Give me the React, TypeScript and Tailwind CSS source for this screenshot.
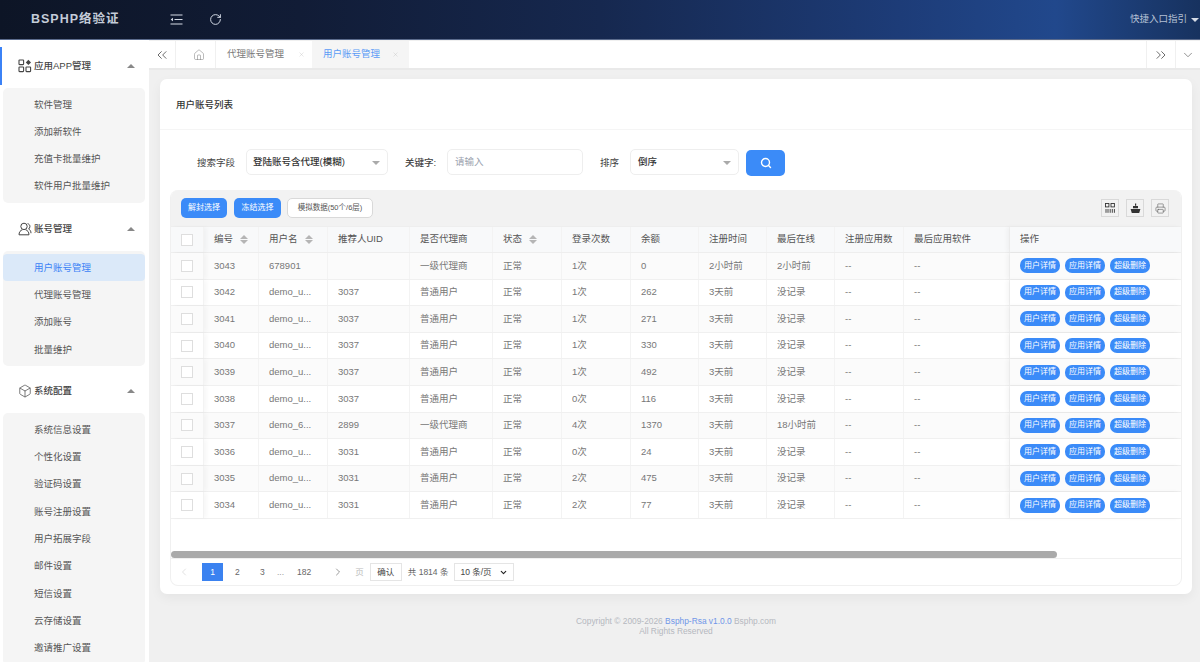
import React from "react";
import { ChevronsLeft, ChevronsRight, ChevronDown, ChevronLeft, ChevronRight, Home, RotateCw, Box, Printer, Search, X } from "lucide-react";

const font = "[font-family:'Liberation_Sans','Noto_Sans_CJK_SC',sans-serif]";

function AppIcon() {
  return (
    <svg width="14" height="14" viewBox="0 0 14 14" fill="none" stroke="#444" strokeWidth="1.1">
      <rect x="1" y="1" width="4.6" height="4.6" rx="0.6" />
      <rect x="1" y="8" width="4.6" height="4.6" rx="0.6" />
      <rect x="8" y="8" width="4.6" height="4.6" rx="0.6" />
      <path d="M10.4 0.8l2.6 2.6-2.6 2.6-2.6-2.6z" fill="#444" stroke="none" />
    </svg>
  );
}

function UserIcon() {
  return (
    <svg width="14" height="14" viewBox="0 0 14 14" fill="none" stroke="#444" strokeWidth="1">
      <circle cx="6" cy="4.4" r="3.2" />
      <path d="M1 12.8c0-2.8 1.6-4.6 3.4-5M7.6 7.8c1.8.4 3.4 2.2 3.4 5H1" />
      <path d="M9.6 1.6c1.6.5 2.5 1.7 2.3 3.2-.1 1-.6 1.7-1.3 2.2 1.4.6 2.4 2.2 2.4 4.2" />
    </svg>
  );
}

function MenuIcon() {
  return (
    <svg width="13" height="11" viewBox="0 0 13 11" fill="none" stroke="#d5dbe6" strokeWidth="1.2" className="ml-[20px]">
      <path d="M0.5 1h12M4.5 5.5h8M0.5 10h12" />
      <path d="M3 3.8v3.4L0.6 5.5z" fill="#d5dbe6" stroke="none" />
    </svg>
  );
}

function Caret({ up = false, color = "#999" }: { up?: boolean; color?: string }) {
  return (
    <svg width="8" height="4" viewBox="0 0 8 4" className="shrink-0">
      <path d={up ? "M4 0l4 4H0z" : "M0 0h8L4 4z"} fill={color} />
    </svg>
  );
}

function Sort() {
  return (
    <span className="flex flex-col gap-[1.5px] ml-[7px]">
      <Caret up color="#b5b5b5" />
      <Caret color="#b5b5b5" />
    </span>
  );
}

function Group({ title, icon, items, active, mark, mt }: { title: string; icon: React.ReactNode; items: string[]; active?: string; mark?: boolean; mt: string }) {
  return (
    <div className={mt}>
      <div className={`h-[38px] flex items-center pl-[15px] pr-[14px] border-l-2 ${mark ? "border-[#3b82f6]" : "border-transparent"}`}>
        <span className="w-[15px] flex justify-center">{icon}</span>
        <span className="ml-[2px] text-[9.5px] text-[#444] font-medium flex-1">{title}</span>
        <Caret up color="#888" />
      </div>
      <div className="ml-[3px] mr-[4px] mt-[3px] bg-[#f5f5f5] rounded-[5px] py-[3px]">
        {items.map((t) => (
          <div key={t} className={`h-[27.3px] flex items-center pl-[31px] text-[9.5px] rounded-[4px] ${t === active ? "bg-[#dbe9f9] text-[#3b82f6]" : "text-[#555]"}`}>
            {t}
          </div>
        ))}
      </div>
    </div>
  );
}

const widths = ["w-[33px]", "w-[55px]", "w-[69px]", "w-[82px]", "w-[83px]", "w-[69px]", "w-[69px]", "w-[68px]", "w-[68px]", "w-[68px]", "w-[69px]", "w-[106px]", "w-[171px]"];

const heads: [string, boolean][] = [
  ["", false],
  ["编号", true],
  ["用户名", true],
  ["推荐人UID", false],
  ["是否代理商", false],
  ["状态", true],
  ["登录次数", false],
  ["余额", false],
  ["注册时间", false],
  ["最后在线", false],
  ["注册应用数", false],
  ["最后应用软件", false],
  ["操作", false],
];

const rows: string[][] = [
  ["3043", "678901", "", "一级代理商", "正常", "1次", "0", "2小时前", "2小时前"],
  ["3042", "demo_u...", "3037", "普通用户", "正常", "1次", "262", "3天前", "没记录"],
  ["3041", "demo_u...", "3037", "普通用户", "正常", "1次", "271", "3天前", "没记录"],
  ["3040", "demo_u...", "3037", "普通用户", "正常", "1次", "330", "3天前", "没记录"],
  ["3039", "demo_u...", "3037", "普通用户", "正常", "1次", "492", "3天前", "没记录"],
  ["3038", "demo_u...", "3037", "普通用户", "正常", "0次", "116", "3天前", "没记录"],
  ["3037", "demo_6...", "2899", "一级代理商", "正常", "4次", "1370", "3天前", "18小时前"],
  ["3036", "demo_u...", "3031", "普通用户", "正常", "0次", "24", "3天前", "没记录"],
  ["3035", "demo_u...", "3031", "普通用户", "正常", "2次", "475", "3天前", "没记录"],
  ["3034", "demo_u...", "3031", "普通用户", "正常", "2次", "77", "3天前", "没记录"],
];

function Check() {
  return <span className="block w-[12px] h-[12px] bg-white border border-[#dedede]" />;
}

function Cell({ w, children, kind }: { w: string; children?: React.ReactNode; kind?: "first" | "last" }) {
  const extra =
    kind === "last"
      ? "shadow-[-3px_0_4px_rgba(0,0,0,0.04)]"
      : kind === "first"
        ? "border-r border-[#f3f3f3] shadow-[3px_0_4px_rgba(0,0,0,0.03)]"
        : "border-r border-[#f3f3f3]";
  return <div className={`${w} shrink-0 h-full flex items-center pl-[10px] ${extra} truncate`}>{children}</div>;
}

function Pill({ t }: { t: string }) {
  return <span className="h-[15px] w-[40px] mr-[5px] rounded-[7px] bg-[#3b8bf8] text-white text-[8px] flex items-center justify-center">{t}</span>;
}

function ToolIcon({ children }: { children: React.ReactNode }) {
  return <span className="w-[18px] h-[18px] border border-[#d9d9d9] flex items-center justify-center">{children}</span>;
}

export default function App() {
  return (
    <div className={`${font} w-[1200px] h-[662px] overflow-hidden flex flex-col bg-[#f0f0f0] text-[9.5px]`}>
      <header className="h-[40px] shrink-0 flex items-center border-b border-[#5b6b8c] bg-[linear-gradient(90deg,#0d1526_0%,#111c36_25%,#16284f_50%,#1d3c78_75%,#21488c_88%,#17325f_100%)]">
        <div className="w-[150px] pl-[31px] text-[#c4ccd9] text-[12.5px] font-bold tracking-[1px] whitespace-nowrap">BSPHP络验证</div>
        <MenuIcon />
        <RotateCw size={13} strokeWidth={1.8} color="#d5dbe6" className="ml-[26px]" />
        <div className="ml-auto flex items-center gap-[4px] pr-[1px] text-[#b4c0d4] text-[9.5px]">
          快捷入口指引
          <Caret color="#d5dbe6" />
        </div>
      </header>
      <div className="flex-1 flex min-h-0">
        <aside className="w-[149px] shrink-0 bg-white pt-[7px] overflow-hidden">
          <Group mark mt="" title="应用APP管理" icon={<AppIcon />} items={["软件管理", "添加新软件", "充值卡批量维护", "软件用户批量维护"]} />
          <Group mt="mt-[7px]" title="账号管理" icon={<UserIcon />} active="用户账号管理" items={["用户账号管理", "代理账号管理", "添加账号", "批量维护"]} />
          <Group mt="mt-[6px]" title="系统配置" icon={<Box size={14} strokeWidth={1.2} color="#444" />} items={["系统信息设置", "个性化设置", "验证码设置", "账号注册设置", "用户拓展字段", "邮件设置", "短信设置", "云存储设置", "邀请推广设置"]} />
        </aside>
        <main className="flex-1 min-w-0 flex flex-col">
          <div className="h-[29px] mt-[1px] shrink-0 flex bg-white border-b-2 border-[#e9e9e9] text-[#777]">
            <div className="w-[27px] flex items-center justify-center border-r border-[#f0f0f0]"><ChevronsLeft size={16} strokeWidth={1.3} color="#555" /></div>
            <div className="w-[40px] flex items-center justify-center pl-[7px] border-r border-[#f0f0f0]"><Home size={12} strokeWidth={1} color="#777" /></div>
            <div className="w-[96px] flex items-center pl-[11px]">
              <span className="flex-1">代理账号管理</span>
              <X size={7} strokeWidth={1.2} color="#bbb" className="mr-[7px]" />
            </div>
            <div className="w-[97px] flex items-center pl-[11px] bg-[#f5f5f5] text-[#5a9bf6]">
              <span className="flex-1">用户账号管理</span>
              <X size={7} strokeWidth={1.2} color="#bbb" className="mr-[10px]" />
            </div>
            <div className="ml-auto w-[29px] flex items-center justify-center border-l border-[#f0f0f0]"><ChevronsRight size={16} strokeWidth={1.3} color="#555" /></div>
            <div className="w-[25px] flex items-center justify-center border-l border-[#f0f0f0]"><ChevronDown size={14} strokeWidth={1.2} color="#666" /></div>
          </div>
          <div className="w-[1032px] h-[515px] ml-[11px] mt-[9px] shrink-0 bg-white rounded-[7px] shadow-[0_4px_12px_rgba(0,0,0,0.05)] flex flex-col">
            <div className="h-[51px] shrink-0 flex items-center pl-[16px] pt-[2px] border-b border-[#f5f5f5] text-[#333] font-medium">用户账号列表</div>
            <div className="h-[60px] shrink-0 flex items-center text-[#444] pt-[4px]">
              <span className="ml-[37px] w-[49px] pt-[2px]">搜索字段</span>
              <div className="w-[142px] h-[26px] pt-[1px] bg-white border border-[#eee] rounded-[5px] flex items-center justify-between pl-[6px] pr-[7px] text-[#333] font-medium">
                登陆账号含代理(模糊)
                <Caret color="#aaa" />
              </div>
              <span className="ml-[17px] w-[42px] pt-[2px] font-medium">关键字:</span>
              <div className="w-[136px] h-[26px] pt-[1px] border border-[#eee] rounded-[5px] flex items-center pl-[7px] text-[#9ca3af]">请输入</div>
              <span className="ml-[17px] w-[30px] pt-[2px]">排序</span>
              <div className="w-[109px] h-[26px] pt-[1px] border border-[#eee] rounded-[5px] flex items-center justify-between pl-[7px] pr-[7px] text-[#333] font-medium">
                倒序
                <Caret color="#aaa" />
              </div>
              <button className="ml-[7px] mt-[2px] w-[39px] h-[26px] rounded-[5px] bg-[#3b8bf8] flex items-center justify-center"><Search size={12} strokeWidth={2.8} color="#fff" /></button>
            </div>
            <div className="mx-[10px] h-[396px] shrink-0 border border-[#f0f0f0] border-t-0 rounded-[8px] flex flex-col overflow-hidden">
              <div className="h-[36px] shrink-0 bg-[#f2f2f2] flex items-center pl-[10px] pr-[12px]">
                <button className="w-[46px] h-[20px] rounded-[5px] bg-[#3b8bf8] text-white text-[8px]">解封选择</button>
                <button className="ml-[7px] w-[47px] h-[20px] rounded-[5px] bg-[#3b8bf8] text-white text-[8px]">冻结选择</button>
                <button className="ml-[6px] w-[86px] h-[20px] rounded-[5px] bg-white border border-[#d9d9d9] text-[#555] text-[7.5px]">模拟数据(50个/6层)</button>
                <div className="ml-auto flex gap-[7px]">
                  <ToolIcon>
                    <svg width="10" height="10" viewBox="0 0 10 10" fill="none" stroke="#333" strokeWidth="0.9">
                      <rect x="0.5" y="0.5" width="3.4" height="3.4" />
                      <rect x="6" y="0.5" width="3.4" height="3.4" />
                      <path d="M1 6v3.8M3 6v3.8M5.2 6v3.8M7.3 6v3.8M9.4 6v3.8" />
                    </svg>
                  </ToolIcon>
                  <ToolIcon>
                    <svg width="11" height="11" viewBox="0 0 11 11" fill="#333">
                      <path d="M5 0.5h1.2v2.2H5zM3 3h5v2.2H3zM0.6 6h9.8L9.2 10H1.8z" />
                    </svg>
                  </ToolIcon>
                  <ToolIcon><Printer size={11} strokeWidth={1.2} color="#555" /></ToolIcon>
                </div>
              </div>
              <div className="h-[27px] shrink-0 flex bg-[#f8f9fa] border-y border-[#eee] text-[#555]">
                {heads.map(([h, s], i) => (
                  <Cell key={i} w={widths[i]} kind={i === 12 ? "last" : i === 0 ? "first" : undefined}>
                    {i === 0 ? <Check /> : h}
                    {s && <Sort />}
                  </Cell>
                ))}
              </div>
              {rows.map((r, idx) => (
                <div key={r[0]} className={`h-[26.6px] shrink-0 flex border-b border-[#f0f0f0] text-[#777] ${idx % 2 === 0 ? "bg-[#fbfbfb]" : "bg-white"}`}>
                  <Cell w={widths[0]} kind="first"><Check /></Cell>
                  {r.map((c, i) => (
                    <Cell key={i} w={widths[i + 1]}>{c}</Cell>
                  ))}
                  <Cell w={widths[10]}>--</Cell>
                  <Cell w={widths[11]}>--</Cell>
                  <Cell w={widths[12]} kind="last">
                    <Pill t="用户详情" />
                    <Pill t="应用详情" />
                    <Pill t="超级删除" />
                  </Cell>
                </div>
              ))}
              <div className="flex-1" />
              <div className="h-[8px] shrink-0 border-b border-[#f0f0f0]">
                <div className="h-[7px] w-[886px] bg-[#aaaaaa] rounded-full" />
              </div>
              <div className="h-[26px] shrink-0 flex items-center text-[#666] text-[8.5px]">
                <ChevronLeft size={12} strokeWidth={1.2} color="#ccc" className="ml-[7px]" />
                <span className="ml-[12px] w-[21px] h-[18px] bg-[#3b82f0] text-white flex items-center justify-center">1</span>
                <span className="ml-[12px] w-[6px]">2</span>
                <span className="ml-[19px] w-[6px]">3</span>
                <span className="ml-[11px] text-[#999]">...</span>
                <span className="ml-[13px]">182</span>
                <ChevronRight size={12} strokeWidth={1.2} color="#555" className="ml-[21px]" />
                <span className="ml-[11px] text-[#bbb]">页</span>
                <span className="ml-[6px] w-[32px] h-[18px] border border-[#e5e5e5] text-[#444] flex items-center justify-center">确认</span>
                <span className="ml-[6px]">共 1814 条</span>
                <span className="ml-[6px] w-[60px] h-[18px] border border-[#e5e5e5] text-[#444] flex items-center justify-between px-[5px]">
                  10 条/页
                  <ChevronDown size={9} strokeWidth={3} color="#222" />
                </span>
              </div>
            </div>
          </div>
          <div className="w-[1032px] ml-[11px] mt-[22px] text-center text-[8.4px] leading-[10px] text-[#b5b8bf]">
            <div>Copyright © 2009-2026 <span className="text-[#6f96e8]">Bsphp-Rsa v1.0.0</span> Bsphp.com</div>
            <div>All Rights Reserved</div>
          </div>
        </main>
      </div>
    </div>
  );
}
